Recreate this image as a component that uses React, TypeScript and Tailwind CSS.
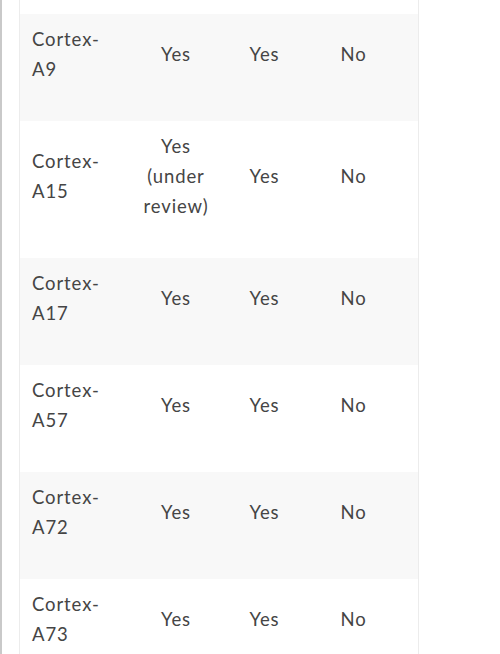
import React from "react";

const rows = [
  { name: ["Cortex-", "A9"], a: ["Yes"], b: "Yes", c: "No" },
  { name: ["Cortex-", "A15"], a: ["Yes", "(under", "review)"], b: "Yes", c: "No" },
  { name: ["Cortex-", "A17"], a: ["Yes"], b: "Yes", c: "No" },
  { name: ["Cortex-", "A57"], a: ["Yes"], b: "Yes", c: "No" },
  { name: ["Cortex-", "A72"], a: ["Yes"], b: "Yes", c: "No" },
  { name: ["Cortex-", "A73"], a: ["Yes"], b: "Yes", c: "No" },
];

const Lines = ({ lines }: { lines: string[] }) => (
  <>
    {lines.map((l, i) => (
      <React.Fragment key={i}>
        {i > 0 && <br />}
        {l}
      </React.Fragment>
    ))}
  </>
);

const App = () => {
  return (
    <div
      className="h-[654px] w-[500px] overflow-hidden bg-white flex text-[#454545] text-[18.5px] leading-[30px] tracking-[0.9px]"
      style={{ fontFamily: "Lato, 'Open Sans', sans-serif" }}
    >
      <div className="w-[2px] bg-[#c9c9c9] shrink-0"></div>
      <div className="ml-[17px] w-[400px] border-x border-[#ececec] pt-[14px]">
        {rows.map((row, i) => (
          <div
            key={i}
            className={`grid grid-cols-[112px_88px_89px_89px_1fr] items-center ${
              i % 2 === 0 ? "bg-[#f8f8f8]" : "bg-white"
            }`}
          >
            <div className="pl-3 pt-[10px] pb-[37px]">
              <Lines lines={row.name} />
            </div>
            <div className="text-center pt-[10px] pb-[37px]">
              <Lines lines={row.a} />
            </div>
            <div className="text-center pt-[10px] pb-[37px]">{row.b}</div>
            <div className="text-center pt-[10px] pb-[37px]">{row.c}</div>
            <div></div>
          </div>
        ))}
      </div>
    </div>
  );
};

export default App;
